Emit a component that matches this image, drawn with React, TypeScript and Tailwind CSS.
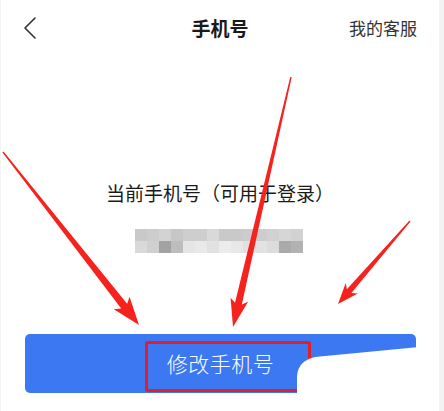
import React from "react"

const font = { fontFamily: '"Noto Sans CJK SC", "Noto Sans", sans-serif' }

const blurRows = [
  ["#c9c9c9", "#cdcdcd", "#d3d3d3", "#c7c7c7", "#cecece", "#cecece", "#d9d9d9", "#c9c9c9", "#c9c9c9", "#cccccc", "#cdcdcd", "#d1d1d1", "#d6d6d6", "#d2d2d2"],
  ["#d9d9d9", "#d0d0d0", "#a2a2a2", "#bdbdbd", "#e5e5e5", "#e9e9e9", "#e1e1e1", "#ececec", "#e8e8e8", "#e1e1e1", "#e2e2e2", "#dcdcdc", "#aaaaaa", "#b2b2b2"],
]

type ArrowProps = { x1: number; y1: number; x2: number; y2: number; head: number; wing: number; neck: number }

function Arrow({ x1, y1, x2, y2, head, wing, neck }: ArrowProps) {
  const dx = x2 - x1
  const dy = y2 - y1
  const len = Math.hypot(dx, dy)
  const ux = dx / len
  const uy = dy / len
  const nx = -uy
  const ny = ux
  const bx = x2 - ux * head
  const by = y2 - uy * head
  const wx = x2 - ux * (head + 4)
  const wy = y2 - uy * (head + 4)
  const pts = [
    [x1 + nx * 0.7, y1 + ny * 0.7],
    [bx + nx * neck, by + ny * neck],
    [wx + nx * wing, wy + ny * wing],
    [x2, y2],
    [wx - nx * wing, wy - ny * wing],
    [bx - nx * neck, by - ny * neck],
    [x1 - nx * 0.7, y1 - ny * 0.7],
  ]
  return <polygon points={pts.map((p) => p.join(",")).join(" ")} fill="#f5221d" />
}

export default function App() {
  return (
    <div className="relative w-[444px] h-[411px] bg-white border-l border-l-[#f4f4f4] border-r-[5px] border-r-[#f3f3f3] overflow-hidden" style={font}>
      <div className="relative h-14 flex items-center justify-center">
        <svg className="absolute left-[22px] top-[17px]" width="14" height="22" viewBox="0 0 14 22" fill="none">
          <path d="M12 1 L2 11 L12 21" stroke="#333" strokeWidth="1.6" strokeLinecap="round" strokeLinejoin="round" />
        </svg>
        <span className="text-[19px] font-bold text-[#1a1a1a]">手机号</span>
        <span className="absolute right-[22px] top-[17px] text-[17px] leading-[22px] text-[#333]">我的客服</span>
      </div>

      <div className="flex flex-col items-center">
        <p className="mt-[124px] text-[19px] leading-[26px] text-[#1a1a1a]">当前手机号（可用于登录）</p>
        <div className="mt-[23px] ml-[-2px] flex flex-col">
          {blurRows.map((row, i) => (
            <div key={i} className="flex">
              {row.map((c, j) => (
                <div key={j} className="w-3 h-3" style={{ backgroundColor: c }} />
              ))}
            </div>
          ))}
        </div>
      </div>

      <button className="mx-6 mt-[81px] w-[391px] h-[59px] rounded-[5px] bg-[#3c78f1] flex items-center justify-center text-white text-[21px] font-light tracking-[0.5px]">
        修改手机号
      </button>

      <div className="absolute left-[144px] top-[341px] w-[166px] h-[51px] border-[3px] border-[#e41e26] rounded-[2px]" />

      <svg className="absolute left-0 top-0" width="444" height="411" viewBox="0 0 444 411">
        <path d="M296 396 L296 376 Q297 361 314 357 L418 347 L418 396 Z" fill="#ffffff" />
        <Arrow x1={2} y1={152} x2={138} y2={325} head={24} wing={10} neck={3.8} />
        <Arrow x1={290} y1={77} x2={232} y2={327} head={24} wing={9} neck={3.5} />
        <Arrow x1={409} y1={221} x2={337} y2={304} head={17} wing={8} neck={3} />
      </svg>
    </div>
  )
}
